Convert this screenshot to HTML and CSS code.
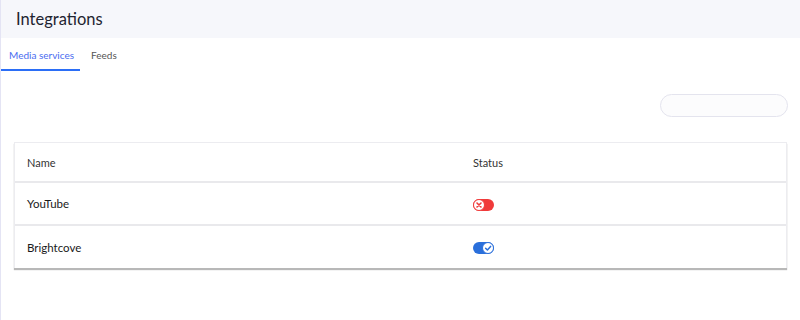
FILE: index.html
```html
<!DOCTYPE html>
<html>
<head>
<meta charset="utf-8">
<link rel="stylesheet" href="styles.css">
</head>
<body>
<div class="app">
  <header class="page-header">
    <h1 class="title">Integrations</h1>
  </header>
  <nav class="tabs">
    <a class="tab active">Media services</a>
    <a class="tab">Feeds</a>
  </nav>
  <div class="toolbar">
    <input class="search" type="text">
  </div>
  <div class="card">
    <div class="row head">
      <div class="col-name">Name</div>
      <div class="col-status">Status</div>
    </div>
    <div class="row">
      <div class="col-name">YouTube</div>
      <div class="col-status">
        <span class="toggle off"><span class="knob"><svg viewBox="0 0 10 10" width="10" height="10"><path d="M3 3 L7 7 M7 3 L3 7" stroke="#f03a3a" stroke-width="1.6" stroke-linecap="round"/></svg></span></span>
      </div>
    </div>
    <div class="row last">
      <div class="col-name">Brightcove</div>
      <div class="col-status">
        <span class="toggle on"><span class="knob"><svg viewBox="0 0 10 10" width="10" height="10"><path d="M2.6 5.2 L4.4 7 L7.6 3.4" fill="none" stroke="#2a6fdb" stroke-width="1.5" stroke-linecap="round" stroke-linejoin="round"/></svg></span></span>
      </div>
    </div>
  </div>
</div>
</body>
</html>
```

FILE: styles.css
```css
html, body { margin: 0; padding: 0; background: #fff; }
body { font-family: "Lato", "Open Sans", sans-serif; color: #222; }
.app { min-height: 320px; border-left: 1px solid #e4e4f4; box-sizing: border-box; }
.page-header { background: #f6f7fb; height: 38px; display: flex; align-items: center; padding-left: 15px; }
.title { margin: 0; font-family: "Lato", sans-serif; font-weight: 400; font-size: 16.5px; color: #1e2430; }
.tabs { display: flex; height: 33px; }
.tab { display: flex; align-items: center; padding: 0 8px; font-size: 10px; color: #555; white-space: nowrap; border-bottom: 2px solid transparent; box-sizing: border-box; padding-top: 2px; }
.tab.active { color: #4a6cf0; border-bottom-color: #2b6ef6; width: 79px; margin-right: 3px; }
.toolbar { display: flex; justify-content: flex-end; padding: 23px 12px 0 0; height: 49px; box-sizing: border-box; }
.search { width: 128px; height: 23px; box-sizing: border-box; border: 1px solid #e4e4ee; border-radius: 12px; background: #fcfcfd; outline: none; }
.card { margin: 22px 13px 0 13px; background: #fff; border: 1px solid #ececf0; border-bottom: none; box-shadow: 0 2px 1px rgba(0,0,0,0.28); }
.row { display: flex; align-items: center; height: 41px; border-bottom: 2px solid #e9e9ec; font-size: 11.5px; color: #1a1a1a; }
.row.head { height: 38px; font-size: 11px; color: #333; }
.row.last { border-bottom: none; height: 42px; }
.col-name { width: 446px; padding-left: 12px; }
.col-status { display: flex; align-items: center; }
.toggle { display: inline-flex; align-items: center; width: 21px; height: 12px; border-radius: 6px; margin-top: 2px; }
.toggle.off { background: #f03a3a; justify-content: flex-start; }
.toggle.on { background: #2a6fdb; justify-content: flex-end; }
.knob { width: 12px; height: 12px; border-radius: 50%; background: #fff; box-sizing: border-box; display: flex; align-items: center; justify-content: center; }
.toggle.off .knob { border: 1px solid #f03a3a; }
.toggle.on .knob { border: 1px solid #2a6fdb; }
```
